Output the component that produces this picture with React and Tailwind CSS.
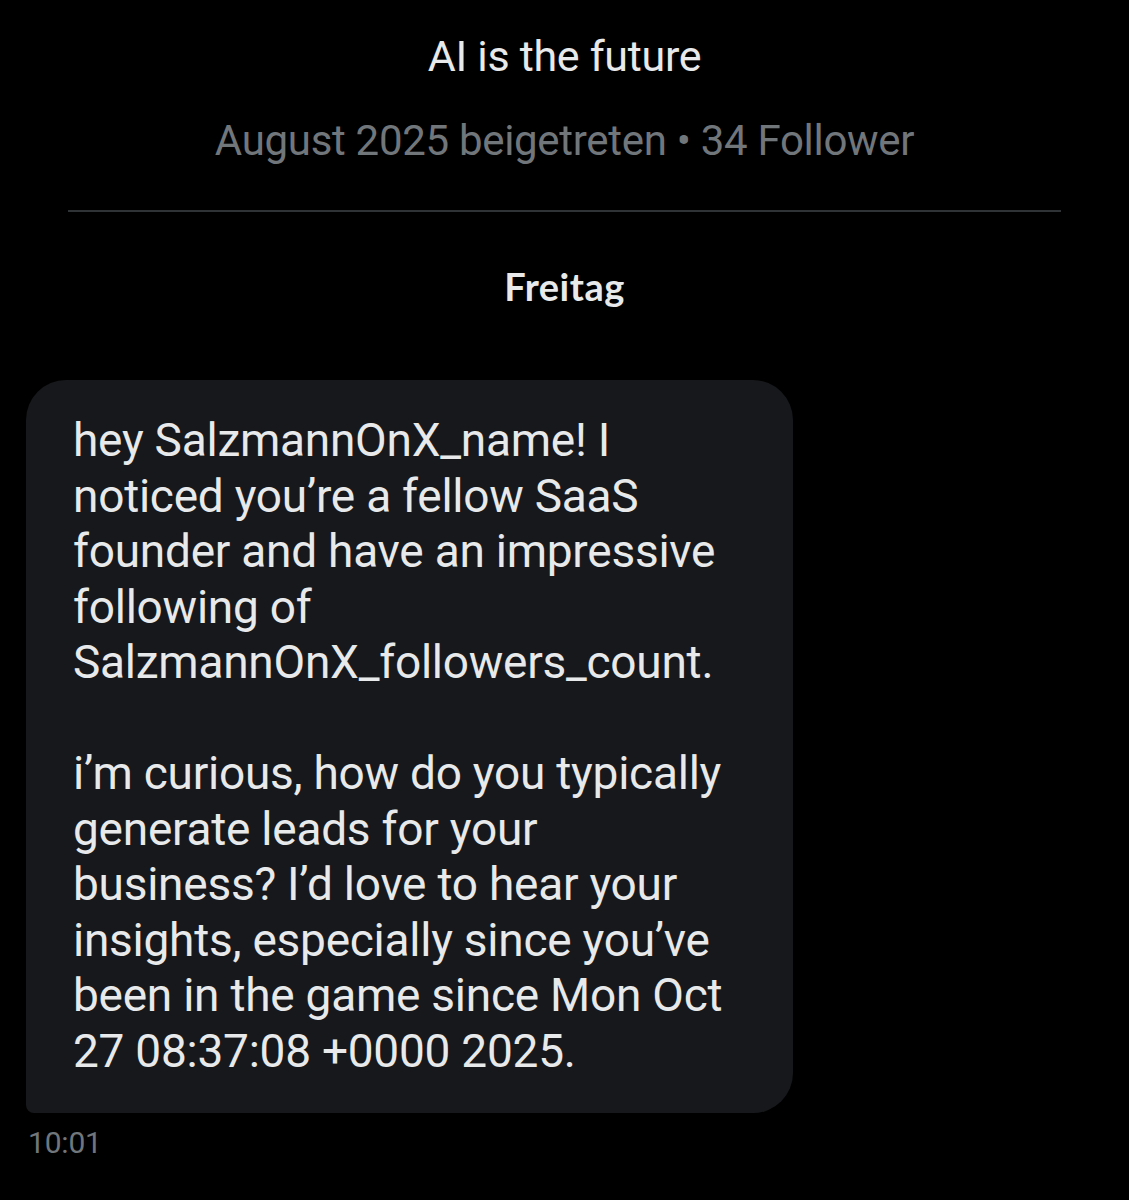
const lines1 = [
  "hey SalzmannOnX_name! I",
  "noticed you’re a fellow SaaS",
  "founder and have an impressive",
  "following of",
  "SalzmannOnX_followers_count.",
];

const lines2 = [
  "i’m curious, how do you typically",
  "generate leads for your",
  "business? I’d love to hear your",
  "insights, especially since you’ve",
  "been in the game since Mon Oct",
  "27 08:37:08 +0000 2025.",
];

export default function App() {
  return (
    <div className="min-h-[1200px] w-[1129px] bg-black font-['Roboto',sans-serif] overflow-hidden">
      <div className="flex flex-col items-center pt-[31px]">
        <div className="text-[43px] leading-[50px] text-[#e7e9ea] tracking-[-0.3px]">AI is the future</div>
        <div className="mt-[35px] text-[42px] leading-[50px] text-[#71767b] tracking-[-0.3px]">
          August 2025 beigetreten • 34 Follower
        </div>
      </div>
      <div className="mx-[68px] mt-[44px] h-[2px] bg-[#2f3336]" />
      <div className="mt-[54px] text-center font-['Lato',sans-serif] font-bold text-[38px] leading-[40px] tracking-[0.5px] text-[#e7e9ea]">
        Freitag
      </div>
      <div className="mt-[74px] ml-[26px] w-[767px] rounded-[40px] rounded-bl-[8px] bg-[#17181b] pl-[47px] pt-[33px] pb-[34px] text-[46px] leading-[55.5px] text-[#e7e9ea] tracking-[-0.25px]">
        {lines1.map((l) => (
          <div key={l} className="whitespace-nowrap">{l}</div>
        ))}
        <div className="h-[55.5px]" />
        {lines2.map((l) => (
          <div key={l} className="whitespace-nowrap">{l}</div>
        ))}
      </div>
      <div className="mt-[10px] ml-[28px] text-[30px] leading-[40px] text-[#71767b] tracking-[-0.2px]">10:01</div>
    </div>
  );
}
